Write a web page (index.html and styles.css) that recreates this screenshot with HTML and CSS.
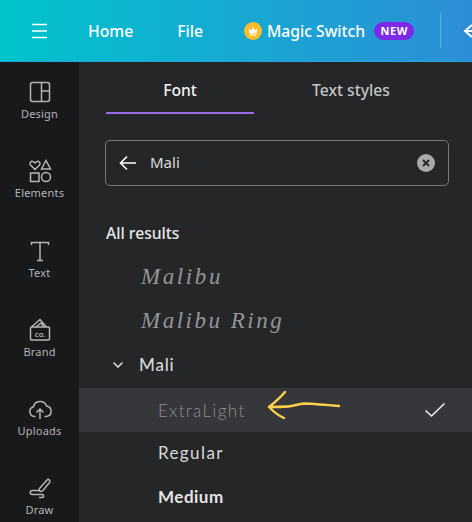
FILE: index.html
```html
<!DOCTYPE html>
<html lang="en">
<head>
  <meta charset="UTF-8" />
  <title>Font panel</title>
  <link rel="stylesheet" href="styles.css">
</head>
<body>
  <header class="topbar">
    <button class="menu-btn" aria-label="Menu">
      <svg width="18" height="16" viewBox="0 0 18 16"><path d="M1 1.500h15M1 8h15M1 14.500h15" stroke="#fff" stroke-width="1.600" fill="none"/></svg>
    </button>
    <span class="nav-link home">Home</span>
    <span class="nav-link file">File</span>
    <span class="crown">
      <svg width="18" height="18" viewBox="0 0 18 18"><circle cx="9" cy="9" r="9" fill="#fdbc2c"/><path d="M4.500 6.500l2.400 2 2.100-3.200 2.100 3.200 2.400-2-.9 5H5.400z" fill="#fff"/><path d="M5.600 13h6.800" stroke="#fff" stroke-width="1.100"/></svg>
    </span>
    <span class="nav-link magic">Magic Switch</span>
    <span class="new-pill">NEW</span>
    <span class="divider"></span>
    <svg class="undo" width="20" height="18" viewBox="0 0 20 18"><path d="M10 3L3 9l7 6M3 9h16" stroke="#fff" stroke-width="2" fill="none"/></svg>
  </header>

  <div class="main">
    <nav class="sidebar">
      <div class="side-item">
        <svg width="24" height="24" viewBox="0 0 24 24" fill="none" stroke="#b4b5b6" stroke-width="1.500"><rect x="2.500" y="2.500" width="19" height="19" rx="2"/><path d="M13.500 2.500v19M13.500 11h8"/></svg>
        <span>Design</span>
      </div>
      <div class="side-item">
        <svg width="24" height="24" viewBox="0 0 24 24" fill="none" stroke="#b4b5b6" stroke-width="1.500"><path d="M7 10.500L2.500 6c-1.500-2 .5-4.500 2.800-3.300L7 4l1.700-1.300C11 1.500 13 4 11.500 6z"/><path d="M18 1.500l4.500 8.500h-9z"/><rect x="2.500" y="14" width="8.500" height="8.500"/><circle cx="18" cy="18" r="4.500"/></svg>
        <span>Elements</span>
      </div>
      <div class="side-item">
        <svg width="24" height="24" viewBox="0 0 24 24" fill="none" stroke="#b4b5b6" stroke-width="1.500"><path d="M3.500 6V3.500h17V6M12 3.500v18M9 21.500h6"/></svg>
        <span>Text</span>
      </div>
      <div class="side-item">
        <svg width="24" height="24" viewBox="0 0 24 24" fill="none" stroke="#b4b5b6" stroke-width="1.500"><path d="M3.500 9L12 1.500 18.500 9M8 9l5-4 3 4"/><rect x="2.500" y="9" width="19" height="13" rx="1"/><text x="12" y="18.500" class="brand-co">CO.</text></svg>
        <span>Brand</span>
      </div>
      <div class="side-item">
        <svg width="24" height="24" viewBox="0 0 24 24" fill="none" stroke="#b4b5b6" stroke-width="1.500"><path d="M7.500 19.500H6.500a5 5 0 0 1-1-9.800A6.800 6.800 0 0 1 18.500 9a5.300 5.300 0 0 1 0 10.500h-2"/><path d="M12 22V12.500M8.500 15.500l3.500-3.500 3.500 3.500"/></svg>
        <span>Uploads</span>
      </div>
      <div class="side-item">
        <svg width="24" height="24" viewBox="0 0 24 24" fill="none" stroke="#b4b5b6" stroke-width="1.500"><path d="M11.500 12.500l7.500-8.500c1.500-1.500 4 .5 2.500 2.500l-6.500 8c-1.500 1.500-5 1-3.500-2z"/><path d="M11 14.500H4.500c-3 0-3 4 0 4h10c1.500 0 1.500 3 0 3H11"/></svg>
        <span>Draw</span>
      </div>
    </nav>

    <section class="panel">
      <div class="tabs">
        <div class="tab active">Font</div>
        <div class="tab">Text styles</div>
      </div>

      <div class="search">
        <svg width="18" height="16" viewBox="0 0 18 16"><path d="M8 1.500L1.500 8 8 14.500M1.500 8h15.500" stroke="#fff" stroke-width="1.600" fill="none"/></svg>
        <span class="search-value">Mali</span>
        <span class="clear">
          <svg width="8" height="8" viewBox="0 0 8 8"><path d="M1 1l6 6M7 1L1 7" stroke="#252627" stroke-width="1.800"/></svg>
        </span>
      </div>

      <h2 class="results-title">All results</h2>

      <ul class="font-list">
        <li class="font-row script">Malibu</li>
        <li class="font-row script ring">Malibu Ring</li>
        <li class="font-row family">
          <svg class="chevron" width="12" height="8" viewBox="0 0 12 8"><path d="M1.500 1.500L6 6l4.500-4.500" stroke="#d4d4d5" stroke-width="1.600" fill="none"/></svg>
          Mali
        </li>
        <li class="font-row weight light selected">
          ExtraLight
          <svg class="check" width="22" height="16" viewBox="0 0 22 16"><path d="M1.500 8.500L7.500 14 20.500 1.500" stroke="#f0f0f0" stroke-width="1.600" fill="none"/></svg>
        </li>
        <li class="font-row weight">Regular</li>
        <li class="font-row weight medium">Medium</li>
      </ul>

      <svg class="scribble" width="76" height="32" viewBox="0 0 76 32"><path d="M73 15C62 14 50 13 38 12.500 32 13 28 15 22 15.500 14 16 8 16 3 16M19 1C14 7 8 12 3 16 7 20 13 25 18 27" stroke="#fdd34d" stroke-width="2.400" fill="none" stroke-linecap="round" stroke-linejoin="round"/></svg>
    </section>
  </div>
</body>
</html>
```
FILE: styles.css
```css
* {
  box-sizing: border-box;
  margin: 0;
  padding: 0;
  font-family: 'Noto Sans', sans-serif;
}

html, body {
  height: 522px;
  overflow: hidden;
}

body {
  background: #252627;
  display: flex;
  flex-direction: column;
}

.topbar {
  height: 62px;
  flex-shrink: 0;
  display: flex;
  align-items: center;
  background: linear-gradient(90deg, #00c4cc, #2d8ed8);
  border-bottom: 1px solid #22a6dc;
  color: #fff;
  overflow: hidden;
}

.topbar > * {
  flex-shrink: 0;
}

.menu-btn {
  margin-left: 31px;
  width: 18px;
  height: 16px;
  background: none;
  border: none;
  display: flex;
}

.nav-link {
  font-size: 15.7px;
  font-weight: 500;
  white-space: nowrap;
}

.home {
  margin-left: 39px;
}

.file {
  margin-left: 44px;
}

.crown {
  margin-left: 41px;
  display: flex;
}

.magic {
  margin-left: 5px;
}

.new-pill {
  margin-left: 9px;
  width: 40px;
  height: 18px;
  border-radius: 9px;
  background: #7d2ae8;
  font-size: 11px;
  font-weight: 700;
  letter-spacing: 0.5px;
  line-height: 18px;
  text-align: center;
}

.divider {
  margin-left: 26px;
  width: 1px;
  height: 35px;
  background: rgba(255, 255, 255, 0.25);
}

.undo {
  margin-left: 21px;
}

.main {
  flex: 1;
  display: flex;
  min-height: 0;
}

.sidebar {
  width: 79px;
  flex-shrink: 0;
  background: #18191b;
  padding-top: 18px;
  overflow: hidden;
}

.side-item {
  height: 79.3px;
  display: flex;
  flex-direction: column;
  align-items: center;
  gap: 2px;
  color: #b4b5b6;
  font-size: 11px;
  letter-spacing: 0.2px;
  line-height: 15px;
}

.brand-co {
  font-size: 6px;
  font-weight: 700;
  fill: #b4b5b6;
  stroke: none;
  text-anchor: middle;
}

.panel {
  flex: 1;
  position: relative;
  background: #252627;
  overflow: hidden;
}

.tabs {
  display: flex;
  margin: 0 24px 0 27px;
  height: 52px;
}

.tab {
  flex: 1;
  height: 52px;
  padding-top: 16px;
  text-align: center;
  font-size: 15.7px;
  font-weight: 500;
  line-height: 24px;
  color: #c4c5c6;
  border-bottom: 2px solid transparent;
}

.tab.active {
  flex: 0 0 148px;
  color: #f2f2f2;
  border-bottom-color: #9b6ce8;
}

.search {
  margin: 26px 23px 0 26px;
  height: 46px;
  display: flex;
  align-items: center;
  padding: 0 13px;
  border: 1px solid #77787a;
  border-radius: 5px;
}

.search-value {
  flex: 1;
  margin-left: 13px;
  font-size: 15px;
  color: #dcdcdd;
  margin-top: -2px;
}

.clear {
  width: 18px;
  height: 18px;
  border-radius: 50%;
  background: #a9a9aa;
  display: flex;
  align-items: center;
  justify-content: center;
}

.results-title {
  margin: 37px 0 0 27px;
  font-size: 15.7px;
  font-weight: 500;
  line-height: 20px;
  color: #e8e8e9;
}

.font-list {
  list-style: none;
  margin-top: 13px;
}

.font-row {
  height: 44px;
  display: flex;
  align-items: center;
  padding: 0 0 3px 79px;
  font-family: 'Lato', sans-serif;
  font-size: 17px;
  color: #d8d8d9;
}

.script {
  padding: 0 0 2px 62px;
  font-family: 'Liberation Serif', serif;
  font-style: italic;
  font-size: 23px;
  letter-spacing: 2.6px;
  color: #949596;
}

.ring {
  letter-spacing: 2.5px;
}

.family {
  padding-left: 33px;
  gap: 15px;
  letter-spacing: 0.8px;
  font-weight: 500;
}

.weight {
  letter-spacing: 1.4px;
}

.light {
  font-weight: 300;
  color: #8f9091;
}

.medium {
  font-weight: 700;
  letter-spacing: 0.5px;
  color: #e4e4e5;
}

.selected {
  background: #36373a;
  justify-content: space-between;
  padding-right: 26px;
  padding-bottom: 0;
}

.scribble {
  position: absolute;
  left: 187px;
  top: 329px;
}
```
